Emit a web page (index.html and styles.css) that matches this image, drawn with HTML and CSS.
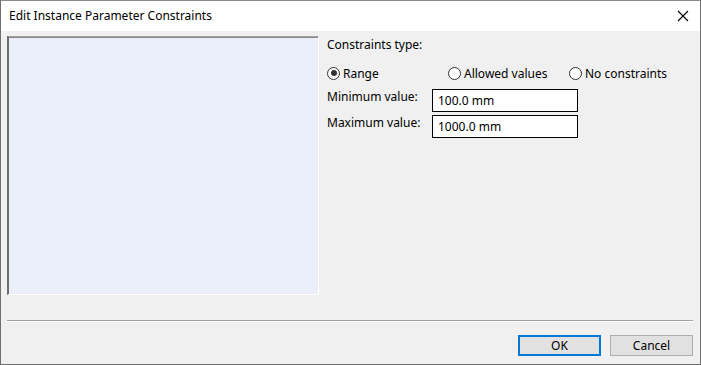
FILE: index.html
```html
<!DOCTYPE html>
<html lang="en">
<head>
    <meta charset="UTF-8">
    <title>Edit Instance Parameter Constraints</title>
    <link rel="stylesheet" href="styles.css">
</head>
<body>
    <div class="window">
        <div class="titlebar">
            <span class="title">Edit Instance Parameter Constraints</span>
            <span class="close">
                <svg width="12" height="12" viewBox="0 0 12 12"><path d="M1 1L11 11M11 1L1 11" stroke="#000" stroke-width="1.1"/></svg>
            </span>
        </div>
        <div class="content">
            <div class="main">
                <div class="preview"></div>
                <div class="options">
                    <p class="caption">Constraints type:</p>
                    <div class="radios">
                        <label class="radio range"><span class="dot checked"></span>Range</label>
                        <label class="radio allowed"><span class="dot"></span>Allowed values</label>
                        <label class="radio"><span class="dot"></span>No constraints</label>
                    </div>
                    <div class="field first">
                        <span class="field-label">Minimum value:</span>
                        <input type="text" class="textbox" value="100.0 mm">
                    </div>
                    <div class="field">
                        <span class="field-label">Maximum value:</span>
                        <input type="text" class="textbox" value="1000.0 mm">
                    </div>
                </div>
            </div>
            <div class="separator"></div>
            <div class="buttons">
                <button class="button default">OK</button>
                <button class="button">Cancel</button>
            </div>
        </div>
    </div>
</body>
</html>
```

FILE: styles.css
```css
body {
    margin: 0;
    padding: 0;
    background-color: #f0f0f0;
    font-family: "Noto Sans", "Open Sans", sans-serif;
    font-size: 12px;
    color: #000;
}

.window {
    width: 701px;
    height: 365px;
    box-sizing: border-box;
    border: 1px solid #6f6f6f;
    border-top: 1px solid #8a8a8a;
    display: flex;
    flex-direction: column;
}

.titlebar {
    height: 30px;
    background-color: #fff;
    display: flex;
    align-items: center;
    justify-content: space-between;
    padding: 0 10px 0 8px;
}

.title {
    font-size: 12px;
    margin-top: -2px;
}

.close {
    display: flex;
    margin-right: 1px;
}

.content {
    flex: 1;
    background-color: #f0f0f0;
    padding: 5px 7px 0 6px;
    display: flex;
    flex-direction: column;
}

.main {
    display: flex;
}

.preview {
    width: 309px;
    height: 257px;
    background-color: #ebeff9;
    border-top: 1px solid #a0a0a0;
    border-left: 2px solid #6c6c6c;
    border-right: 1px solid #fff;
    border-bottom: 1px solid #fff;
    box-shadow: inset 0 1px 0 #8a8a8a;
}

.options {
    margin-left: 8px;
    width: 350px;
}

.caption {
    margin: 1px 0 0 0;
    line-height: 16px;
}

.radios {
    display: flex;
    margin-top: 12px;
    height: 16px;
    align-items: center;
}

.radio {
    display: flex;
    align-items: center;
}

.range {
    width: 121px;
}

.allowed {
    width: 121px;
}

.dot {
    width: 11px;
    height: 11px;
    border: 1px solid #333;
    border-radius: 50%;
    background-color: #fff;
    margin-right: 3px;
    position: relative;
}

.dot.checked::after {
    content: "";
    position: absolute;
    left: 2.5px;
    top: 2.5px;
    width: 6px;
    height: 6px;
    border-radius: 50%;
    background-color: #333;
}

.field {
    display: flex;
    margin-top: 3px;
}

.field.first {
    margin-top: 8px;
}

.field-label {
    width: 105px;
    line-height: 16px;
}

.textbox {
    width: 146px;
    height: 23px;
    box-sizing: border-box;
    border: 1px solid #000;
    font-family: "Noto Sans", "Open Sans", sans-serif;
    font-size: 12px;
    padding: 0 5px;
    margin: 0;
    background-color: #fff;
}

.separator {
    margin-top: 25px;
    height: 1px;
    background-color: #a0a0a0;
    border-bottom: 1px solid #fff;
}

.buttons {
    display: flex;
    justify-content: flex-end;
    gap: 9px;
    margin-top: 13px;
}

.button {
    width: 83px;
    height: 21px;
    box-sizing: border-box;
    background-color: #e1e1e1;
    border: 1px solid #adadad;
    font-family: "Noto Sans", "Open Sans", sans-serif;
    font-size: 12px;
    padding: 0;
    color: #000;
}

.button.default {
    border: 2px solid #0078d7;
}
```
